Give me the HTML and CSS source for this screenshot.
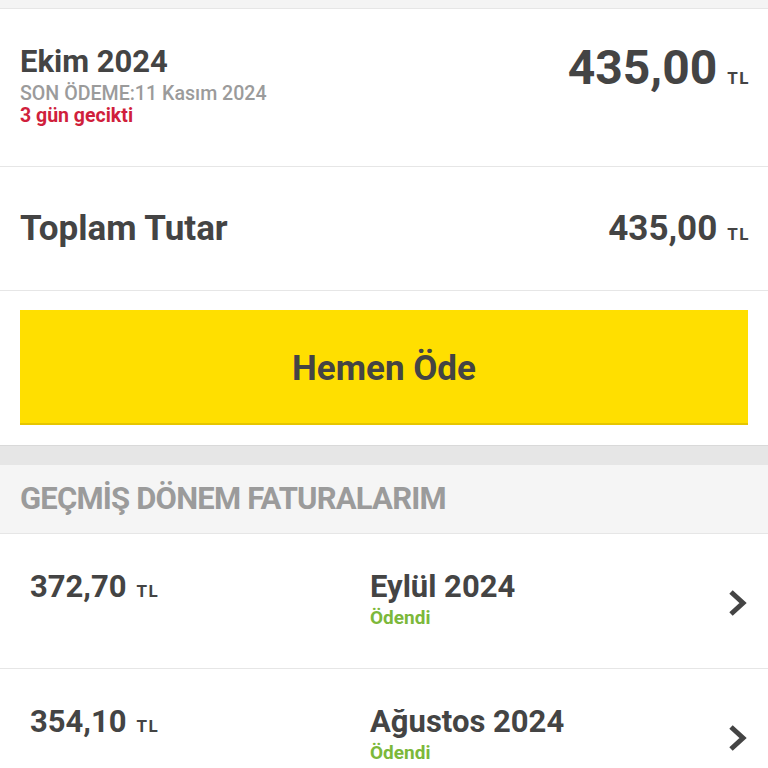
FILE: index.html
```html
<!DOCTYPE html>
<html lang="tr">
<head>
    <meta charset="UTF-8">
    <meta name="viewport" content="width=device-width, initial-scale=1.0">
    <title>Faturalarım</title>
    <link rel="stylesheet" href="styles.css">
</head>
<body>

<div class="page">
    <div class="top-strip"></div>

    <div class="bill-card">
        <div class="bill-info">
            <div class="bill-month">Ekim 2024</div>
            <div class="bill-due">SON ÖDEME:11 Kasım 2024</div>
            <div class="bill-late">3 gün gecikti</div>
        </div>
        <div class="bill-amount">435,00<span class="currency">TL</span></div>
    </div>

    <div class="total-card">
        <div class="total-label">Toplam Tutar</div>
        <div class="total-amount">435,00<span class="currency">TL</span></div>
    </div>

    <div class="pay-area">
        <button class="pay-button">Hemen Öde</button>
    </div>

    <div class="spacer"></div>

    <div class="history-header">GEÇMİŞ DÖNEM FATURALARIM</div>

    <ul class="history-list">
        <li class="history-item">
            <div class="history-amount">372,70<span class="currency">TL</span></div>
            <div class="history-info">
                <div class="history-month">Eylül 2024</div>
                <div class="history-status">Ödendi</div>
            </div>
            <svg class="chevron" width="20" height="26" viewBox="0 0 20 26">
                <path d="M3 2 L15 13 L3 24" fill="none" stroke="#444" stroke-width="5"/>
            </svg>
        </li>
        <li class="history-item">
            <div class="history-amount">354,10<span class="currency">TL</span></div>
            <div class="history-info">
                <div class="history-month">Ağustos 2024</div>
                <div class="history-status">Ödendi</div>
            </div>
            <svg class="chevron" width="20" height="26" viewBox="0 0 20 26">
                <path d="M3 2 L15 13 L3 24" fill="none" stroke="#444" stroke-width="5"/>
            </svg>
        </li>
    </ul>
</div>

</body>
</html>
```

FILE: styles.css
```css
body {
    margin: 0;
    font-family: Roboto, 'Noto Sans', sans-serif;
    background: #fff;
    color: #444;
    overflow: hidden;
}

.page {
    width: 768px;
}

.top-strip {
    height: 8px;
    background: #f4f4f4;
    border-bottom: 1px solid #e6e6e6;
}

.bill-card {
    height: 126px;
    padding: 31px 20px 0 20px;
    display: flex;
    justify-content: space-between;
    align-items: flex-start;
    border-bottom: 1px solid #e6e6e6;
}

.bill-info {
    margin-top: 4px;
}

.bill-month {
    font-size: 31px;
    font-weight: bold;
    line-height: 36px;
    margin-bottom: 3px;
}

.bill-due {
    font-size: 19.6px;
    font-weight: 500;
    line-height: 21px;
    color: #9b9b9b;
}

.bill-late {
    font-size: 19.5px;
    font-weight: bold;
    line-height: 23px;
    color: #d01f3c;
}

.bill-amount {
    font-size: 48px;
    font-weight: bold;
    line-height: 56px;
}

.currency {
    font-size: 17px;
    font-weight: bold;
    letter-spacing: 1.5px;
    margin-left: 10px;
}

.total-card {
    height: 123px;
    padding: 0 18px 0 20px;
    display: flex;
    justify-content: space-between;
    align-items: center;
    border-bottom: 1px solid #e6e6e6;
}

.total-label {
    font-size: 35px;
    font-weight: bold;
}

.total-amount {
    font-size: 35px;
    font-weight: bold;
}

.bill-card .currency {
    margin-right: -2px;
}

.pay-area {
    padding: 19px 20px 20px 20px;
    border-bottom: 1px solid #d9d9d9;
}

.pay-button {
    display: block;
    width: 100%;
    height: 115px;
    padding-top: 4px;
    border: none;
    border-bottom: 2px solid #e6c600;
    background: #ffdf00;
    color: #444;
    font-family: Roboto, 'Noto Sans', sans-serif;
    font-size: 35px;
    font-weight: bold;
    cursor: pointer;
}

.spacer {
    height: 19px;
    background: #e6e6e6;
}

.history-header {
    height: 68px;
    line-height: 68px;
    padding-left: 20px;
    background: #f5f5f5;
    color: #9b9b9b;
    font-size: 31px;
    font-weight: bold;
    letter-spacing: -0.8px;
    border-bottom: 1px solid #e6e6e6;
}

.history-list {
    list-style: none;
    margin: 0;
    padding: 0;
}

.history-item {
    height: 99px;
    padding: 35px 20px 0 30px;
    display: flex;
    align-items: flex-start;
    border-bottom: 1px solid #e6e6e6;
}

.history-amount {
    width: 340px;
    font-size: 31px;
    font-weight: bold;
    line-height: 36px;
}

.history-info {
    flex: 1;
}

.history-month {
    font-size: 31px;
    font-weight: bold;
    line-height: 36px;
    margin-bottom: 2px;
}

.history-status {
    font-size: 19px;
    font-weight: bold;
    line-height: 22px;
    color: #7cb83a;
}

.chevron {
    align-self: center;
    margin-top: -32px;
}
```
